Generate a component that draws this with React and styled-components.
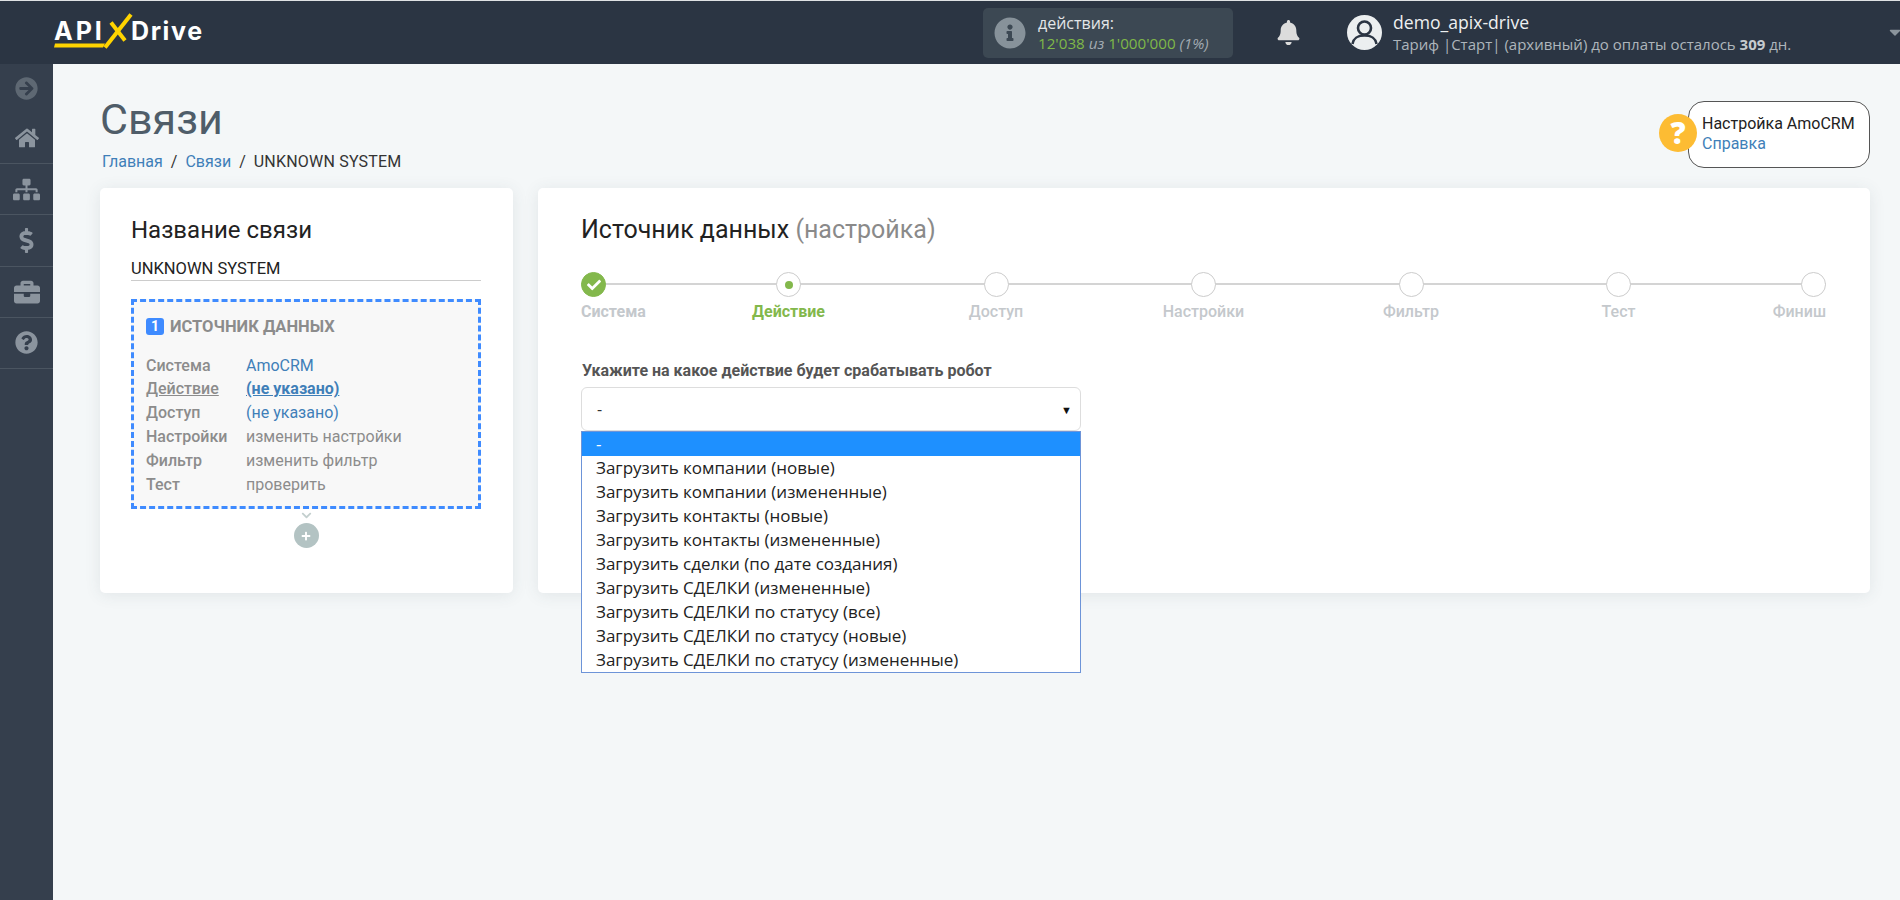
import React from 'react';
import styled, { createGlobalStyle } from 'styled-components';
import { FaArrowCircleRight, FaHome, FaSitemap, FaDollarSign, FaBriefcase, FaQuestionCircle, FaInfoCircle, FaBell, FaCheck, FaPlus, FaChevronDown, FaCaretDown } from 'react-icons/fa';

const Global = createGlobalStyle`
  html, body { margin: 0; padding: 0; background: #f4f7f8; }
  body { font-family: Roboto, "Liberation Sans", sans-serif; font-size: 16px; color: #222; }
  * { box-sizing: border-box; }
`;

const Page = styled.div`
  min-height: 900px;
  height: 900px;
  overflow: hidden;
  display: flex;
  flex-direction: column;
`;
const Header = styled.header`
  height: 64px;
  flex: none;
  background: #2b3543;
  border-top: 1px solid #dfe2e4;
  display: flex;
  align-items: center;
  color: #fff;
  position: relative;
`;
const LogoWrap = styled.div`
  display: flex;
  align-items: center;
  width: 983px;
  flex: none;
  padding-left: 54px;
`;
const Logo = styled.div`
  position: relative;
  width: 150px;
  height: 36px;
  display: flex;
  align-items: flex-start;
  font-family: Inter, sans-serif;
  font-weight: 700;
  font-size: 25px;
  line-height: 33px;
  color: #fff;
`;
const LogoApi = styled.span`
  width: 77px;
  letter-spacing: 3px;
`;
const LogoDrive = styled.span`
  letter-spacing: 1.6px;
`;
const LogoMark = styled.svg`
  position: absolute;
  left: 0;
  top: -3px;
  width: 90px;
  height: 40px;
`;
const Stats = styled.div`
  width: 250px;
  height: 50px;
  background: #3c4853;
  border-radius: 5px;
  display: flex;
  align-items: center;
  padding-left: 11px;
  gap: 12px;
  font-family: "Open Sans", sans-serif;
  font-size: 15.2px;
  line-height: 20px;
  flex: none;
`;
const StatsIcon = styled(FaInfoCircle)`
  color: #87929a;
  font-size: 32px;
  flex: none;
`;
const StatsLabel = styled.div`
  color: #e3e6e8;
  font-size: 16px;
`;
const Green = styled.span`
  color: #7fb848;
`;
const Muted = styled.i`
  color: #a3abb2;
  font-style: italic;
`;
const Bell = styled(FaBell)`
  color: #dcdcdc;
  font-size: 25px;
  margin-left: 43px;
  flex: none;
`;
const Avatar = styled.svg`
  width: 35px;
  height: 35px;
  margin-left: 46px;
  flex: none;
`;
const User = styled.div`
  margin-left: 11px;
  font-family: "Open Sans", sans-serif;
`;
const UserName = styled.div`
  font-size: 17.6px;
  line-height: 22px;
  color: #eef0f1;
`;
const UserPlan = styled.div`
  font-size: 15px;
  line-height: 22px;
  color: #aeb5bb;
  b { color: #c6cbcf; font-weight: 700; }
`;
const HeaderCaret = styled(FaCaretDown)`
  position: absolute;
  right: -4px;
  top: 22px;
  font-size: 18px;
  color: #8b949c;
`;
const Body = styled.div`
  flex: 1;
  display: flex;
  min-height: 0;
`;
const Sidebar = styled.nav`
  width: 53px;
  flex: none;
  background: #353f4d;
  color: #8b949e;
  display: flex;
  flex-direction: column;
`;
const SideFirst = styled.div`
  height: 49px;
  display: flex;
  align-items: center;
  justify-content: center;
  font-size: 23px;
  color: #5e6873;
`;
const SideItem = styled.div`
  height: 51.2px;
  display: flex;
  align-items: center;
  justify-content: center;
  border-bottom: 1px solid #4b5561;
  font-size: ${p => p.$size || 24}px;
`;
const Main = styled.main`
  flex: 1;
  min-width: 0;
  padding: 0 30px 0 47px;
`;
const Head = styled.div`
  height: 124px;
  display: flex;
  justify-content: space-between;
`;
const HeadLeft = styled.div`
  padding: 30px 0 0 2px;
`;
const Title = styled.h1`
  margin: 0 0 0 -2px;
  font-weight: 400;
  font-size: 43px;
  line-height: 50px;
  color: #4f5d69;
`;
const Crumbs = styled.div`
  margin-top: 8px;
  font-size: 16px;
  line-height: 20px;
  display: flex;
  gap: 8px;
  color: #333;
`;
const CrumbCurrent = styled.span`
  letter-spacing: 0.2px;
`;
const BlueLink = styled.a`
  color: #3f7fb8;
  text-decoration: none;
`;
const Help = styled.div`
  position: relative;
  align-self: flex-start;
  margin-top: 37px;
  width: 182px;
  height: 67px;
  background: #fff;
  border: 1px solid #555;
  border-radius: 16px;
  padding: 12px 0 0 13px;
  font-size: 16px;
  line-height: 20px;
  color: #222;
`;
const HelpIcon = styled.div`
  position: absolute;
  left: -30px;
  top: 12px;
  width: 38px;
  height: 38px;
  border-radius: 50%;
  background: #fdbc33;
  color: #fff;
  font-family: "Open Sans", sans-serif;
  font-weight: 800;
  font-size: 30px;
  line-height: 38px;
  text-align: center;
`;
const Cards = styled.div`
  display: flex;
  gap: 25px;
  align-items: stretch;
`;
const Card = styled.section`
  background: #fff;
  border-radius: 5px;
  box-shadow: 0 2px 16px rgba(60, 80, 90, 0.1);
  height: 405px;
  position: relative;
`;
const LeftCard = styled(Card)`
  width: 413px;
  flex: none;
  padding: 28px 32px 0 31px;
`;
const RightCard = styled(Card)`
  flex: 1;
  min-width: 0;
  padding: 28px 44px 0 43px;
`;
const CardTitle = styled.h2`
  margin: 0;
  font-weight: 400;
  font-size: ${p => p.$size || 24}px;
  line-height: 28px;
  color: #222;
  span { color: #8a8a8a; }
`;
const NameField = styled.div`
  margin-top: 12px;
  height: 24px;
  line-height: 26px;
  font-size: 16.5px;
  color: #222;
  border-bottom: 1px solid #ccc;
  box-sizing: content-box;
`;
const Source = styled.div`
  margin-top: 18px;
  height: 210px;
  border: 3px dashed #3f8bff;
  background: #f8f8f8;
  padding: 14px 0 0 12px;
`;
const SourceHead = styled.div`
  display: flex;
  align-items: center;
  gap: 6px;
  height: 20px;
  font-weight: 700;
  font-size: 16.5px;
  color: #8c8c8c;
`;
const Num = styled.span`
  width: 18px;
  height: 17px;
  border-radius: 3px;
  background: #3f8bff;
  color: #fff;
  font-size: 14px;
  line-height: 17px;
  text-align: center;
`;
const SourceTable = styled.div`
  margin-top: 17.5px;
  display: grid;
  grid-template-columns: 100px 1fr;
  grid-auto-rows: 23.9px;
  font-size: 16px;
  line-height: 23.9px;
`;
const RowLabel = styled.div`
  font-weight: 500;
  color: #8c8c8c;
  text-decoration: ${p => (p.$active ? 'underline' : 'none')};
`;
const RowValue = styled.div`
  color: ${p => (p.$link ? '#3f7fb8' : '#8c8c8c')};
  font-weight: ${p => (p.$active ? 700 : 400)};
  text-decoration: ${p => (p.$active ? 'underline' : 'none')};
`;
const AddWrap = styled.div`
  display: flex;
  flex-direction: column;
  align-items: center;
  color: #c3cfce;
`;
const AddChevron = styled(FaChevronDown)`
  font-size: 11px;
  margin-top: 1px;
`;
const AddButton = styled.div`
  width: 25px;
  height: 25px;
  margin-top: 2px;
  border-radius: 50%;
  background: #b3c3c3;
  color: #fff;
  display: flex;
  align-items: center;
  justify-content: center;
  font-size: 10px;
`;
const Steps = styled.div`
  position: relative;
  margin-top: 28px;
  height: 50px;
  display: flex;
  justify-content: space-between;
  &::before {
    content: '';
    position: absolute;
    left: 0;
    right: 0;
    top: 11px;
    height: 2px;
    background: #d4d4d4;
  }
`;
const Step = styled.div`
  position: relative;
  width: 0;
  display: flex;
  flex-direction: column;
  align-items: ${p => p.$align};
`;
const Dot = styled.div`
  width: 25px;
  height: 25px;
  flex: none;
  border-radius: 50%;
  background: ${p => (p.$done ? '#83b84c' : '#fff')};
  border: 1px solid ${p => (p.$done ? '#83b84c' : '#ccc')};
  color: #fff;
  font-size: 14px;
  display: flex;
  align-items: center;
  justify-content: center;
`;
const DotInner = styled.span`
  width: 8px;
  height: 8px;
  border-radius: 50%;
  background: #83b84c;
`;
const StepLabel = styled.div`
  margin-top: 5px;
  white-space: nowrap;
  font-size: 16px;
  line-height: 20px;
  font-weight: ${p => (p.$active || p.$done ? 700 : 500)};
  color: ${p => (p.$active ? '#83b84c' : '#c4c8cc')};
`;
const FieldLabel = styled.div`
  margin-top: 39px;
  padding-left: 1px;
  font-size: 16px;
  line-height: 20px;
  font-weight: 700;
  color: #555;
`;
const SelectWrap = styled.div`
  position: relative;
  margin-top: 6px;
  width: 500px;
`;
const SelectBox = styled.div`
  height: 44px;
  border: 1px solid #ddd;
  border-radius: 6px;
  background: #fff;
  padding: 0 8px 0 15px;
  display: flex;
  align-items: center;
  justify-content: space-between;
  font-family: "Open Sans", sans-serif;
  font-size: 16px;
  color: #333;
`;
const Arrow = styled.span`
  font-size: 11px;
  color: #111;
`;
const DropList = styled.ul`
  position: absolute;
  left: 0;
  right: 0;
  top: 44px;
  margin: 0;
  padding: 0;
  list-style: none;
  background: #fff;
  border: 1px solid #6d94d8;
  font-family: "Open Sans", sans-serif;
  font-size: 17px;
  color: #222;
`;
const DropItem = styled.li`
  height: 24px;
  line-height: 24px;
  padding-left: 14px;
  background: ${p => (p.$selected ? '#1e90ff' : 'transparent')};
  color: ${p => (p.$selected ? '#fff' : '#222')};
  white-space: nowrap;
`;

const rows = [
  ['Система', 'AmoCRM', true, false],
  ['Действие', '(не указано)', true, true],
  ['Доступ', '(не указано)', true, false],
  ['Настройки', 'изменить настройки', false, false],
  ['Фильтр', 'изменить фильтр', false, false],
  ['Тест', 'проверить', false, false],
];
const steps = ['Система', 'Действие', 'Доступ', 'Настройки', 'Фильтр', 'Тест', 'Финиш'];
const options = [
  '-',
  'Загрузить компании (новые)',
  'Загрузить компании (измененные)',
  'Загрузить контакты (новые)',
  'Загрузить контакты (измененные)',
  'Загрузить сделки (по дате создания)',
  'Загрузить СДЕЛКИ (измененные)',
  'Загрузить СДЕЛКИ по статусу (все)',
  'Загрузить СДЕЛКИ по статусу (новые)',
  'Загрузить СДЕЛКИ по статусу (измененные)',
];

export default function App() {
  return (
    <Page>
      <Global />
      <Header>
        <LogoWrap>
          <Logo>
            <LogoApi>API</LogoApi>
            <LogoDrive>Drive</LogoDrive>
            <LogoMark viewBox="0 0 90 40">
              <path d="M1 31.5 H51 L49 35.5 H0 Z" fill="#ffd400" />
              <path d="M51 35.5 L77 2.5" stroke="#ffd400" strokeWidth="4" fill="none" />
              <path d="M57 10.5 L71 28.5" stroke="#ffd400" strokeWidth="4" fill="none" />
            </LogoMark>
          </Logo>
        </LogoWrap>
        <Stats>
          <StatsIcon />
          <div>
            <StatsLabel>действия:</StatsLabel>
            <div>
              <Green>12'038</Green> <Muted>из</Muted> <Green>1'000'000</Green> <Muted>(1%)</Muted>
            </div>
          </div>
        </Stats>
        <Bell />
        <Avatar viewBox="0 0 35 35">
          <circle cx="17.5" cy="17.5" r="17.5" fill="#eceff0" />
          <circle cx="17.5" cy="13" r="6.5" fill="none" stroke="#2b3543" strokeWidth="2.6" />
          <path d="M5.5 29 C7 21.5 12 20.5 17.5 20.5 C23 20.5 28 21.5 29.5 29" fill="none" stroke="#2b3543" strokeWidth="2.6" />
        </Avatar>
        <User>
          <UserName>demo_apix-drive</UserName>
          <UserPlan>Тариф |Старт| (архивный) до оплаты осталось <b>309</b> дн.</UserPlan>
        </User>
        <HeaderCaret />
      </Header>
      <Body>
        <Sidebar>
          <SideFirst><FaArrowCircleRight /></SideFirst>
          <SideItem $size={24}><FaHome /></SideItem>
          <SideItem $size={27}><FaSitemap /></SideItem>
          <SideItem $size={25}><FaDollarSign /></SideItem>
          <SideItem $size={26}><FaBriefcase /></SideItem>
          <SideItem $size={23}><FaQuestionCircle /></SideItem>
        </Sidebar>
        <Main>
          <Head>
            <HeadLeft>
              <Title>Связи</Title>
              <Crumbs>
                <BlueLink>Главная</BlueLink>
                <span>/</span>
                <BlueLink>Связи</BlueLink>
                <span>/</span>
                <CrumbCurrent>UNKNOWN SYSTEM</CrumbCurrent>
              </Crumbs>
            </HeadLeft>
            <Help>
              <HelpIcon>?</HelpIcon>
              <div>Настройка AmoCRM</div>
              <BlueLink>Справка</BlueLink>
            </Help>
          </Head>
          <Cards>
            <LeftCard>
              <CardTitle>Название связи</CardTitle>
              <NameField>UNKNOWN SYSTEM</NameField>
              <Source>
                <SourceHead>
                  <Num>1</Num>
                  ИСТОЧНИК ДАННЫХ
                </SourceHead>
                <SourceTable>
                  {rows.map(([label, value, link, active]) => (
                    <React.Fragment key={label}>
                      <RowLabel $active={active}>{label}</RowLabel>
                      <RowValue $link={link} $active={active}>{value}</RowValue>
                    </React.Fragment>
                  ))}
                </SourceTable>
              </Source>
              <AddWrap>
                <AddChevron />
                <AddButton><FaPlus /></AddButton>
              </AddWrap>
            </LeftCard>
            <RightCard>
              <CardTitle $size={25}>
                Источник данных <span>(настройка)</span>
              </CardTitle>
              <Steps>
                {steps.map((s, i) => (
                  <Step key={s} $align={i === 0 ? 'flex-start' : i === steps.length - 1 ? 'flex-end' : 'center'}>
                    <Dot $done={i === 0}>
                      {i === 0 && <FaCheck />}
                      {i === 1 && <DotInner />}
                    </Dot>
                    <StepLabel $active={i === 1} $done={i === 0}>{s}</StepLabel>
                  </Step>
                ))}
              </Steps>
              <FieldLabel>Укажите на какое действие будет срабатывать робот</FieldLabel>
              <SelectWrap>
                <SelectBox>
                  <span>-</span>
                  <Arrow>▼</Arrow>
                </SelectBox>
                <DropList>
                  {options.map((o, i) => (
                    <DropItem key={o} $selected={i === 0}>{o}</DropItem>
                  ))}
                </DropList>
              </SelectWrap>
            </RightCard>
          </Cards>
        </Main>
      </Body>
    </Page>
  );
}
